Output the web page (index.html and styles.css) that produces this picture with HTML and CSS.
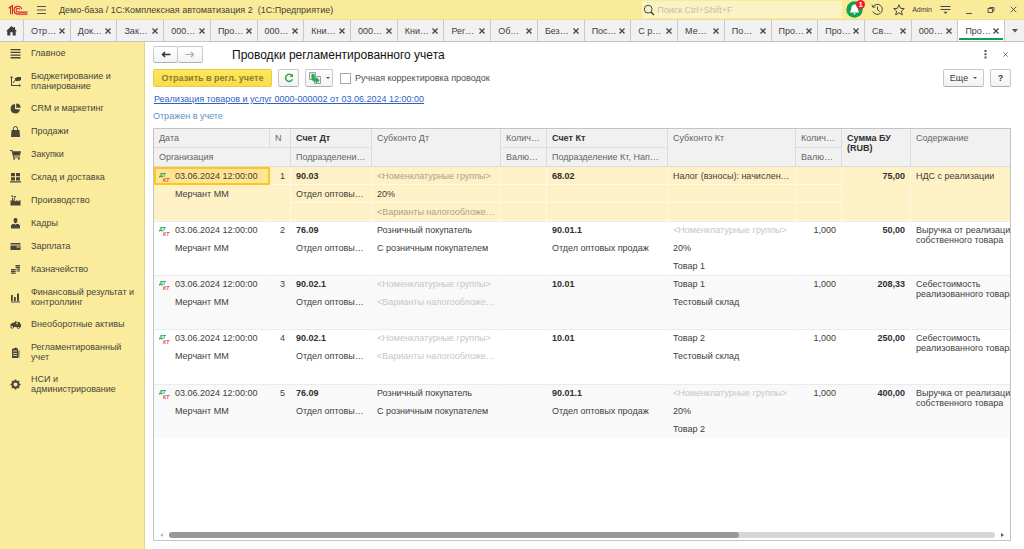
FILE: index.html
```html
<!DOCTYPE html>
<html lang="ru">
<head>
<meta charset="utf-8">
<title>Проводки регламентированного учета</title>
<link rel="stylesheet" href="styles.css">
</head>
<body>
<svg class="defs" aria-hidden="true">
  <symbol id="dtkt" viewBox="0 0 12 12"><text class="dt" x="0" y="6">ДТ</text><text class="kt" x="4" y="11">КТ</text></symbol>
  <symbol id="x" viewBox="0 0 8 8"><path d="M1.5 1.5l5 5M6.5 1.5l-5 5"/></symbol>
</svg>
<header class="topbar">
  <svg class="logo" viewBox="0 0 20 12"><g fill="none" stroke="#d8232a" stroke-width="1.1"><path d="M.7 4.200L2.600 2.800V10.200M1.800 3.200L4.500 1.500V10.200"/><path d="M13.700 5A3.900 3.900 0 1 0 10 10.100H19.500"/><path d="M11.800 5.600A1.900 1.900 0 1 0 10 8.100H19.500"/></g></svg>
  <button class="plain" aria-label="Меню"><svg width="11" height="10" viewBox="0 0 11 10"><path d="M1 1.500h9M1 5h9M1 8.500h9" stroke="#5a563c"/></svg></button>
  <span class="app">Демо-база / 1С:Комплексная автоматизация 2&nbsp; (1С:Предприятие)</span>
  <label class="search"><svg width="12" height="12" viewBox="0 0 12 12"><circle cx="5.200" cy="5.200" r="3.900" fill="none" stroke="#444"/><path d="M8 8l3 3" stroke="#444" stroke-width="1.500"/></svg><input type="search" aria-label="Поиск" placeholder="Поиск Ctrl+Shift+F"></label>
  <button class="plain bell" aria-label="Уведомления"><svg width="17" height="17" viewBox="0 0 17 17"><circle cx="8.500" cy="8.500" r="8.200" fill="#12a150"/><path d="M8.500 3.500c-2.400 0-3 2-3.200 4.200L4 11.500h9L11.700 7.700C11.500 5.500 10.900 3.500 8.500 3.500zM7 12.200h3l-1.500 1.600z" fill="#fff"/></svg><span class="badge">1</span></button>
  <button class="plain hist" aria-label="История"><svg width="13" height="13" viewBox="0 0 13 13" fill="none" stroke="#444"><path d="M2 3.800A5 5 0 1 1 1.800 8.500M1 1.800l.8 2.400 2.600-.3M6.500 3.500v3.300l2.300 1.700"/></svg></button>
  <button class="plain star" aria-label="Избранное"><svg width="12" height="12" viewBox="0 0 12 12"><path d="M6 .8l1.500 3.500 3.800.3-2.900 2.500.9 3.700L6 8.800l-3.300 2 .9-3.700L.7 4.600l3.800-.3z" fill="none" stroke="#444"/></svg></button>
  <span class="user">Admin</span>
  <button class="plain opts" aria-label="Настройки"><svg width="11" height="10" viewBox="0 0 11 10"><path d="M.5 1.500h10M.5 4.500h10" stroke="#444"/><path d="M3.500 6.800h4L5.500 9z" fill="#444"/></svg></button>
  <button class="plain" aria-label="Свернуть"><svg width="8" height="8" viewBox="0 0 8 8"><path d="M1 7.500h6" stroke="#555"/></svg></button>
  <button class="plain" aria-label="Развернуть"><svg width="8" height="8" viewBox="0 0 8 8" fill="none" stroke="#555"><path d="M1 2.500h4.500v4H1zM2.500 2.500v-1H7V5H5.500"/></svg></button>
  <button class="plain" aria-label="Закрыть"><svg class="cross" width="9" height="9"><use href="#x"/></svg></button>
</header>
<nav class="tabs">
  <button class="home" aria-label="Начальная страница"><svg width="11" height="10" viewBox="0 0 11 10"><path d="M5.500 0L0 5.200h1.300V9.500h3V6.200h2.400v3.300h3V5.200H11L9 3.200V1H7.800v1.100z" fill="#3c3c3c"/></svg></button>
  <button class="tab">Отр…<svg><use href="#x"/></svg></button>
  <button class="tab">Док…<svg><use href="#x"/></svg></button>
  <button class="tab">Зак…<svg><use href="#x"/></svg></button>
  <button class="tab">000…<svg><use href="#x"/></svg></button>
  <button class="tab">Про…<svg><use href="#x"/></svg></button>
  <button class="tab">000…<svg><use href="#x"/></svg></button>
  <button class="tab">Кни…<svg><use href="#x"/></svg></button>
  <button class="tab">000…<svg><use href="#x"/></svg></button>
  <button class="tab">Кни…<svg><use href="#x"/></svg></button>
  <button class="tab">Рег…<svg><use href="#x"/></svg></button>
  <button class="tab">Об…<svg><use href="#x"/></svg></button>
  <button class="tab">Без…<svg><use href="#x"/></svg></button>
  <button class="tab">Пос…<svg><use href="#x"/></svg></button>
  <button class="tab">С р…<svg><use href="#x"/></svg></button>
  <button class="tab">Ме…<svg><use href="#x"/></svg></button>
  <button class="tab">По…<svg><use href="#x"/></svg></button>
  <button class="tab">Про…<svg><use href="#x"/></svg></button>
  <button class="tab">Про…<svg><use href="#x"/></svg></button>
  <button class="tab">Св…<svg><use href="#x"/></svg></button>
  <button class="tab">000…<svg><use href="#x"/></svg></button>
  <button class="tab active">Про…<svg><use href="#x"/></svg></button>
  <button class="home more" aria-label="Все вкладки"><svg width="6" height="4" viewBox="0 0 6 4"><path d="M0 0h6L3 3.500z" fill="#555"/></svg></button>
</nav>
<div class="body">
  <nav class="side">
    <a href="#"><svg viewBox="0 0 11 11"><path d="M.5 1h10v1.300H.5zM.5 3.700h10V5H.5zM.5 6.400h10v1.300H.5zM.5 9.100h10v1.300H.5z"/></svg>Главное</a>
    <a href="#" class="two"><svg viewBox="0 0 11 11"><path d="M1.500 0L0 2h1v8h8v1l2-1.500L9 8v1H2V2h1z"/><path d="M3 7l2.500-3 1.500 1 2-2" fill="none" stroke="#48453a"/><path d="M4.500 2.500l3-1.500H11v3L9 5H6z"/></svg><span>Бюджетирование и планирование</span></a>
    <a href="#"><svg viewBox="0 0 11 11"><path d="M5 1a4.700 4.700 0 1 0 5 5.500L5 6z"/><path d="M6.200.5v4.300h4.500A4.600 4.600 0 0 0 6.200.5z"/></svg>CRM и маркетинг</a>
    <a href="#"><svg viewBox="0 0 11 11"><path d="M1.500 4h8l.5 7H1z"/><path d="M3.500 5V2.500a2 2 0 0 1 4 0V5" fill="none" stroke="#48453a"/></svg>Продажи</a>
    <a href="#"><svg viewBox="0 0 11 11"><path d="M0 1h2.300l.5 1.200H11L10 6.500H3.800l.3 1H10v1H3.200L1.700 2H0z"/><circle cx="4.200" cy="9.700" r="1"/><circle cx="8.800" cy="9.700" r="1"/></svg>Закупки</a>
    <a href="#"><svg viewBox="0 0 11 11"><path d="M1 1h4v3.300H1zM6 1h4v3.300H6zM1 5.200h4v3.300H1zM6 5.200h4v3.300H6zM0 9.300h11v1.200H0z"/></svg>Склад и доставка</a>
    <a href="#"><svg viewBox="0 0 11 11"><path d="M.5 10.500V5.500H2V3h1v2.500h.8V3h1v3.500L7.500 5v1.500l3-1.500v5.500zM1.500.5H3V2H1.500zM3.800 1h2v1.500h-2z"/></svg>Производство</a>
    <a href="#"><svg viewBox="0 0 11 11"><path d="M5.500 0C3.800 0 3.500 1.200 3.600 2.500c.1 1.600 1 2.700 1.900 2.700s1.800-1.100 1.900-2.700C7.500 1.200 7.200 0 5.500 0zM1 10.500V8c0-1.500 1.500-2 3-2.300l1.500 1 1.500-1c1.500.3 3 .8 3 2.300v2.500z"/></svg>Кадры</a>
    <a href="#"><svg viewBox="0 0 11 11"><path d="M.5 2h10v1.500H.5zM.5 4.500h10V9H.5z"/><path d="M6.500 6h3.200" stroke="#faec9c"/></svg>Зарплата</a>
    <a href="#"><svg viewBox="0 0 11 11"><path d="M5.500 1H10v1.200H5.500zM5.500 2.800H10V4H5.500zM6.500 4.600H10v1.200H6.500zM6.500 6.400H10v1.200H6.500zM1 5h4.700v1.200H1zM1 6.800h4.700V8H1zM1 8.600h4.700v1.200H1z"/></svg>Казначейство</a>
    <a href="#" class="two"><svg viewBox="0 0 11 11"><path d="M1 3h1.800v6H1zM4 5h1.800v4H4zM7 1.500h2V9H7zM1 9.500h9v1H1z"/></svg><span>Финансовый результат и контроллинг</span></a>
    <a href="#"><svg viewBox="0 0 11 11"><path d="M0 6l2-2 2.500-.5L5.500 2h1v3.500L8 5l-1-2h2.500l1.500 3v2H4z"/><g fill="none" stroke="#48453a"><circle cx="2.300" cy="7.700" r="1.500"/><circle cx="8.500" cy="8" r="1.400"/></g></svg>Внеоборотные активы</a>
    <a href="#" class="two"><svg viewBox="0 0 11 11"><path d="M2 2l4-1.500L8 2v9H2z"/><path d="M8.900 3.500v7.200" stroke="#48453a"/><path d="M3 4h4M3 6.500h4M3 8.500h4" stroke="#faec9c" stroke-width=".8"/></svg><span>Регламентированный учет</span></a>
    <a href="#" class="two"><svg viewBox="0 0 11 11"><circle cx="5.500" cy="5.500" r="3" fill="none" stroke="#48453a" stroke-width="2"/><path d="M5.500 .5v2M5.500 8.500v2M.5 5.500h2M8.500 5.500h2M2 2l1.300 1.300M7.700 7.700L9 9M9 2L7.700 3.300M3.300 7.700L2 9" stroke="#48453a" stroke-width="1.700"/></svg><span>НСИ и<br>администрирование</span></a>
  </nav>
  <main>
    <div class="titlebar">
      <div class="history"><button class="btn" aria-label="Назад"><svg width="10" height="7" viewBox="0 0 10 7"><path d="M9.500 3.500h-8M4 1L1.500 3.500 4 6" fill="none" stroke="#333" stroke-width="1.500"/></svg></button><button class="btn" aria-label="Вперед"><svg width="10" height="7" viewBox="0 0 10 7"><path d="M.5 3.500h8M6 1l2.500 2.500L6 6" fill="none" stroke="#aaa" stroke-width="1.200"/></svg></button></div>
      <h1>Проводки регламентированного учета</h1>
      <button class="plain" aria-label="Действия"><svg width="3" height="9" viewBox="0 0 3 9"><path d="M.5 0h2v2h-2zM.5 3.300h2v2h-2zM.5 6.600h2v2h-2z" fill="#555"/></svg></button>
      <button class="plain close" aria-label="Закрыть форму"><svg class="cross" width="7" height="7"><use href="#x"/></svg></button>
    </div>
    <div class="toolbar">
      <button class="btn main-action">Отразить в регл. учете</button>
      <button class="btn sq" aria-label="Обновить"><svg width="10" height="10" viewBox="0 0 10 10"><path d="M8 2.600A3.600 3.600 0 1 0 8.500 6.300" fill="none" stroke="#2ba84a" stroke-width="1.500"/><path d="M9 .5V4H5.500z" fill="#2ba84a"/></svg></button>
      <button class="btn go" aria-label="Перейти"><svg width="12" height="12" viewBox="0 0 12 12"><path d="M.5.500h6v7h-6zM5.500 4.500h6v7h-6z" fill="#e8eaec" stroke="#9aa0a6"/><path d="M2.500 2h3v4.500h2V5l3 3.500-3.500 3V9.500H4.500l-2-2z" fill="#25ac50"/></svg><i class="caret"></i></button>
      <label class="check"><input type="checkbox">Ручная корректировка проводок</label>
      <button class="btn wide">Еще<i class="caret"></i></button>
      <button class="btn sq help">?</button>
    </div>
    <a class="doc" href="#">Реализация товаров и услуг 0000-000002 от 03.06.2024 12:00:00</a>
    <div class="status">Отражен в учете</div>
    <section class="grid">
      <div class="rows">
      <table>
        <colgroup><col class="c-date"><col class="c-n"><col class="c-acc"><col class="c-subd"><col class="c-qty"><col class="c-acck"><col class="c-sub"><col class="c-qty"><col class="c-sum"><col></colgroup>
        <thead>
          <tr><th>Дата</th><th>N</th><th class="b">Счет Дт</th><th rowspan="2">Субконто Дт</th><th>Колич…</th><th class="b">Счет Кт</th><th rowspan="2">Субконто Кт</th><th>Колич…</th><th rowspan="2" class="b">Сумма БУ (RUB)</th><th rowspan="2">Содержание</th></tr>
          <tr><th colspan="2">Организация</th><th>Подразделени…</th><th>Валю…</th><th>Подразделение Кт, Нап…</th><th>Валю…</th></tr>
        </thead>
        <tbody class="selected">
          <tr><td class="date current"><svg><use href="#dtkt"/></svg>03.06.2024 12:00:00</td><td class="num">1</td><td class="b">90.03</td><td class="ph">&lt;Номенклатурные группы&gt;</td><td></td><td class="b">68.02</td><td>Налог (взносы): начислен…</td><td></td><td rowspan="3" class="b num">75,00</td><td rowspan="3" class="text">НДС с реализации</td></tr>
          <tr><td colspan="2" rowspan="2" class="org">Мерчант ММ</td><td>Отдел оптовы…</td><td>20%</td><td></td><td></td><td></td><td></td></tr>
          <tr><td></td><td class="ph">&lt;Варианты налогообложе…</td><td></td><td></td><td></td><td></td></tr>
        </tbody>
        <tbody>
          <tr><td class="date"><svg><use href="#dtkt"/></svg>03.06.2024 12:00:00</td><td class="num">2</td><td class="b">76.09</td><td>Розничный покупатель</td><td></td><td class="b">90.01.1</td><td class="ph">&lt;Номенклатурные группы&gt;</td><td class="num">1,000</td><td rowspan="3" class="b num">50,00</td><td rowspan="3" class="text">Выручка от реализации собственного товара</td></tr>
          <tr><td colspan="2" rowspan="2" class="org">Мерчант ММ</td><td>Отдел оптовы…</td><td>С розничным покупателем</td><td></td><td>Отдел оптовых продаж</td><td>20%</td><td></td></tr>
          <tr><td></td><td></td><td></td><td></td><td>Товар 1</td><td></td></tr>
        </tbody>
        <tbody>
          <tr><td class="date"><svg><use href="#dtkt"/></svg>03.06.2024 12:00:00</td><td class="num">3</td><td class="b">90.02.1</td><td class="ph">&lt;Номенклатурные группы&gt;</td><td></td><td class="b">10.01</td><td>Товар 1</td><td class="num">1,000</td><td rowspan="3" class="b num">208,33</td><td rowspan="3" class="text">Себестоимость реализованного товара</td></tr>
          <tr><td colspan="2" rowspan="2" class="org">Мерчант ММ</td><td>Отдел оптовы…</td><td class="ph">&lt;Варианты налогообложе…</td><td></td><td></td><td>Тестовый склад</td><td></td></tr>
          <tr><td></td><td></td><td></td><td></td><td></td><td></td></tr>
        </tbody>
        <tbody>
          <tr><td class="date"><svg><use href="#dtkt"/></svg>03.06.2024 12:00:00</td><td class="num">4</td><td class="b">90.02.1</td><td class="ph">&lt;Номенклатурные группы&gt;</td><td></td><td class="b">10.01</td><td>Товар 2</td><td class="num">1,000</td><td rowspan="3" class="b num">250,00</td><td rowspan="3" class="text">Себестоимость реализованного товара</td></tr>
          <tr><td colspan="2" rowspan="2" class="org">Мерчант ММ</td><td>Отдел оптовы…</td><td class="ph">&lt;Варианты налогообложе…</td><td></td><td></td><td>Тестовый склад</td><td></td></tr>
          <tr><td></td><td></td><td></td><td></td><td></td><td></td></tr>
        </tbody>
        <tbody>
          <tr><td class="date"><svg><use href="#dtkt"/></svg>03.06.2024 12:00:00</td><td class="num">5</td><td class="b">76.09</td><td>Розничный покупатель</td><td></td><td class="b">90.01.1</td><td class="ph">&lt;Номенклатурные группы&gt;</td><td class="num">1,000</td><td rowspan="3" class="b num">400,00</td><td rowspan="3" class="text">Выручка от реализации собственного товара</td></tr>
          <tr><td colspan="2" rowspan="2" class="org">Мерчант ММ</td><td>Отдел оптовы…</td><td>С розничным покупателем</td><td></td><td>Отдел оптовых продаж</td><td>20%</td><td></td></tr>
          <tr><td></td><td></td><td></td><td></td><td>Товар 2</td><td></td></tr>
        </tbody>
      </table>
      </div>
      <div class="scroll"><svg width="3" height="4" viewBox="0 0 3 4"><path d="M3 0v4L0 2z" fill="#bbb"/></svg><div class="track"><div class="thumb"></div></div><svg width="3" height="4" viewBox="0 0 3 4"><path d="M0 0v4l3-2z" fill="#555"/></svg></div>
    </section>
  </main>
</div>
</body>
</html>
```
FILE: styles.css
```css
* { box-sizing: border-box; }
body { margin: 0; height: 100vh; display: flex; flex-direction: column; font: 9px/10px "Liberation Sans", Arial, sans-serif; color: #404040; background: #fff; overflow: hidden; }
button, input { font: inherit; color: inherit; }
svg { flex: none; }
.defs { position: absolute; width: 0; height: 0; }
#x path { fill: none; stroke: #444; stroke-width: var(--cross-width, 1.3); }
.cross { --cross-width: 0.8; }
.dt, .kt { font: italic bold 5px "Liberation Sans", Arial, sans-serif; fill: #159a4c; }
.kt { fill: #dd4a44; }
.plain { border: 0; background: none; padding: 0; display: flex; align-items: center; }

.topbar { height: 20px; flex: none; display: flex; align-items: center; background: #faeb9b; padding: 0 6px 0 8px; gap: 14px; border-bottom: 1px solid #e9dc94; }
.logo { width: 20px; height: 12px; margin-right: -6px; }
.app { color: #45422f; margin-left: -2px; white-space: pre; }
.search { margin-left: auto; flex: 0 0 200px; height: 17px; display: flex; align-items: center; gap: 2px; background: #fcf3c4; padding-left: 1px; margin-right: -10px; }
.search input { border: 0; background: none; padding: 0; width: 160px; outline: 0; }
.search input::placeholder { color: #c4bfa4; opacity: 1; }
.bell { position: relative; }
.badge { position: absolute; right: -2px; top: -1px; width: 9px; height: 9px; border-radius: 50%; background: #ee1c25; color: #fff; font: bold 7px/9px "Liberation Sans", Arial, sans-serif; text-align: center; }
.hist { margin-left: -6px; }
.star { margin-left: -5px; }
.user { font-size: 7px; margin: 0 -6px 0 -7px; }

.tabs { height: 22px; flex: none; display: flex; background: #f1f1f1; border-bottom: 1px solid #c4c4c4; }
.tabs button { border: 0; background: none; padding: 0; display: flex; align-items: center; }
.tabs .home { flex: 0 0 23px; justify-content: center; }
.tabs .tab { flex: 1 1 0; min-width: 0; border-left: 1px solid #c9c9c9; padding: 0 4px 0 7px; justify-content: space-between; white-space: nowrap; }
.tabs .tab svg { width: 8px; height: 8px; }
.tabs .active { background: #fff linear-gradient(#0aa050, #0aa050) 50% 18px / 44px 2px no-repeat; }
.tabs .more { flex-basis: 20px; border-left: 1px solid #c9c9c9; }

.body { flex: 1; min-height: 0; display: flex; }
.side { flex: 0 0 145px; background: #faec9c; border-right: 1px solid #e3d78f; }
.side a { display: flex; align-items: center; gap: 10px; padding: 6px 8px 7px 10px; color: #48453a; text-decoration: none; }
.side .two { padding-bottom: 6px; }
.side svg { width: 11px; height: 11px; margin: -1px 0; fill: #48453a; }

main { flex: 1; min-width: 0; display: flex; flex-direction: column; padding: 4px 13px 8px 8px; }
.titlebar { display: flex; align-items: center; height: 17px; }
.history { display: flex; }
.history .btn { width: 25px; height: 17px; }
.history .btn + .btn { border-left: 0; }
h1 { flex: 1; margin: 0 0 0 29px; font-size: 12px; line-height: 16px; font-weight: 400; color: #111; }
.close { margin: 0 2px 0 15px; }
.btn { height: 18px; border: 1px solid #c8c8c8; border-bottom-color: #b0b0b0; border-radius: 2px; background: linear-gradient(#fff, #f2f2f2); padding: 0; display: flex; align-items: center; justify-content: center; }
.toolbar { display: flex; margin-top: 6px; gap: 6px; }
.main-action { width: 119px; font-weight: 700; color: #8a7c36; background: linear-gradient(#fde75c, #f8dc4a); border-color: #e6cd4c; }
.sq { width: 21px; }
.go { width: 28px; gap: 5px; }
.caret { border: 2px solid transparent; border-top-color: #555; border-bottom: 0; }
.check { display: flex; align-items: center; gap: 4px; margin-right: auto; padding-left: 1px; color: #4d4d4d; }
.check input { appearance: none; width: 11px; height: 11px; margin: 0; border: 1px solid #a8a8a8; background: #fff; }
.wide { width: 41px; gap: 5px; }
.help { font-weight: 700; }
.doc { margin: 7px 0 0 1px; align-self: flex-start; color: #2f5fbf; }
.status { margin-top: 7px; color: #5b93bf; }

.grid { flex: 1; min-height: 0; margin-top: 7px; border: 1px solid #c4c4c4; display: flex; flex-direction: column; }
.rows { flex: 1; min-height: 0; overflow: hidden; }
table { table-layout: fixed; width: calc(100% + 20px); border-collapse: separate; border-spacing: 0; }
.c-date { width: 116px; } .c-n { width: 21px; } .c-acc { width: 81px; } .c-subd { width: 129px; } .c-sub { width: 128px; }
.c-qty { width: 46px; } .c-acck { width: 121px; } .c-sum { width: 69px; }
th, td { padding: 4px 5px 0; text-align: left; vertical-align: top; white-space: nowrap; font-weight: 400; overflow: hidden; }
th { height: 19px; background: #f1f1f1; color: #666; border-right: 1px solid #dcdcdc; border-bottom: 1px solid #dcdcdc; }
th.b { white-space: normal; }
td { height: 18px; padding-right: 4px; border-right: 1px solid transparent; }
.b { font-weight: 700; color: #303030; }
tbody tr:first-child td { border-top: 1px solid #ebebeb; padding-top: 3px; }
tbody:nth-of-type(4) tr:last-child td { height: 19px; }
tbody:nth-of-type(odd) { background: #f9f9f9; }
.num { text-align: right; padding-right: 5px; }
.date svg { width: 12px; height: 12px; margin: 0 4px -2px 0; vertical-align: top; }
.org { padding-left: 21px; }
.ph { color: #c6c6c6; }
.text { white-space: normal; }
tbody.selected { background: #fef1c5; }
.selected td { border-right-color: #fff8e2; border-bottom: 1px solid #fff8e2; }
.selected .ph { color: #aaa38d; }
tbody.selected tr:first-child td { border-top-color: #fef1c5; }
tbody.selected tr:first-child .current { border: 0; box-shadow: inset 0 0 0 2px #f9c922; background: #ffe591; padding-top: 4px; }
.scroll { height: 11px; display: flex; align-items: center; justify-content: space-between; padding: 0 6px; gap: 6px; }
.track { flex: 1; height: 6px; border-radius: 3px; background: #d6d6d6; }
.thumb { width: 69%; height: 6px; border-radius: 3px; background: #999; }
```
